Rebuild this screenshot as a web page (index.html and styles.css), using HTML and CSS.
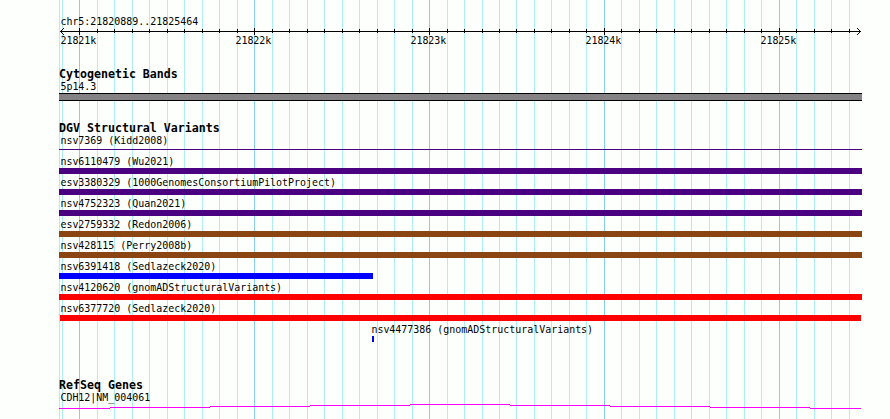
FILE: index.html
```
<!DOCTYPE html>
<html lang="en">
<head>
<meta charset="utf-8">
<title>chr5:21820889..21825464</title>
<link rel="stylesheet" href="styles.css">
</head>
<body>
<svg class="gridlines" width="890" height="419" viewBox="0 0 890 419" shape-rendering="crispEdges" aria-hidden="true">
  <path class="minor" d="M59.5 0v419M62.5 0v419M97.5 0v419M114.5 0v419M132.5 0v419M149.5 0v419M167.5 0v419M184.5 0v419M202.5 0v419M219.5 0v419M237.5 0v419M272.5 0v419M289.5 0v419M307.5 0v419M324.5 0v419M342.5 0v419M359.5 0v419M377.5 0v419M394.5 0v419M412.5 0v419M447.5 0v419M464.5 0v419M482.5 0v419M499.5 0v419M516.5 0v419M534.5 0v419M551.5 0v419M569.5 0v419M586.5 0v419M621.5 0v419M639.5 0v419M656.5 0v419M674.5 0v419M691.5 0v419M709.5 0v419M726.5 0v419M744.5 0v419M761.5 0v419M796.5 0v419M814.5 0v419M831.5 0v419M849.5 0v419"/>
  <path class="major" d="M79.5 0v419M254.5 0v419M429.5 0v419M604.5 0v419M779.5 0v419"/>
</svg>
<main class="browser">
  <section class="ruler">
    <div class="label">chr5:21820889..21825464</div>
    <svg class="axis" width="803" height="7" viewBox="59 27 803 7" shape-rendering="crispEdges" aria-hidden="true">
      <path d="M60 31.5H861"/>
      <path d="M97.5 29v4M114.5 29v4M132.5 29v4M149.5 29v4M167.5 29v4M184.5 29v4M202.5 29v4M219.5 29v4M237.5 29v4M272.5 29v4M289.5 29v4M307.5 29v4M324.5 29v4M342.5 29v4M359.5 29v4M377.5 29v4M394.5 29v4M412.5 29v4M447.5 29v4M464.5 29v4M482.5 29v4M499.5 29v4M516.5 29v4M534.5 29v4M551.5 29v4M569.5 29v4M586.5 29v4M621.5 29v4M639.5 29v4M656.5 29v4M674.5 29v4M691.5 29v4M709.5 29v4M726.5 29v4M744.5 29v4M761.5 29v4M796.5 29v4M814.5 29v4M831.5 29v4M849.5 29v4"/>
      <path d="M79.5 28v7M254.5 28v7M429.5 28v7M604.5 28v7M779.5 28v7"/>
      <path d="M61 30.5h1M62 29.5h1M63 28.5h1M61 32.5h1M62 33.5h1M63 34.5h1M859 30.5h1M858 29.5h1M857 28.5h1M859 32.5h1M858 33.5h1M857 34.5h1"/>
    </svg>
    <div class="ticks"><span>21821k</span><span>21822k</span><span>21823k</span><span>21824k</span><span>21825k</span></div>
  </section>

  <section class="track cyto">
    <h2>Cytogenetic Bands</h2>
    <div class="label">5p14.3</div>
    <div class="band"></div>
  </section>

  <section class="track variants">
    <h2>DGV Structural Variants</h2>
    <div class="feature thin"><div class="label">nsv7369 (Kidd2008)</div><div class="bar indigo"></div></div>
    <div class="feature"><div class="label">nsv6110479 (Wu2021)</div><div class="bar indigo"></div></div>
    <div class="feature"><div class="label">esv3380329 (1000GenomesConsortiumPilotProject)</div><div class="bar indigo"></div></div>
    <div class="feature"><div class="label">nsv4752323 (Quan2021)</div><div class="bar indigo"></div></div>
    <div class="feature"><div class="label">esv2759332 (Redon2006)</div><div class="bar brown"></div></div>
    <div class="feature"><div class="label">nsv428115 (Perry2008b)</div><div class="bar brown"></div></div>
    <div class="feature"><div class="label">nsv6391418 (Sedlazeck2020)</div><div class="bar blue partial"></div></div>
    <div class="feature"><div class="label">nsv4120620 (gnomADStructuralVariants)</div><div class="bar red"></div></div>
    <div class="feature"><div class="label">nsv6377720 (Sedlazeck2020)</div><div class="bar red inset"></div></div>
    <div class="feature small"><div class="label">nsv4477386 (gnomADStructuralVariants)</div><div class="bar blue"></div></div>
  </section>

  <section class="track genes">
    <h2>RefSeq Genes</h2>
    <div class="label">CDH12|NM_004061</div>
    <svg class="intron" width="803" height="5" viewBox="59 404 803 5" shape-rendering="crispEdges" aria-hidden="true">
      <path d="M59 408.5H110M110 407.5H210M210 406.5H310M310 405.5H410M410 404.5H510M510 405.5H610M610 406.5H710M710 407.5H810M810 408.5H861"/>
    </svg>
  </section>
</main>
</body>
</html>
```
FILE: styles.css
```
body {
  margin: 0;
  background: #fdfffc;
  color: #000;
  font: 9.967px/14px "DejaVu Sans Mono", "Liberation Mono", monospace;
  overflow: hidden;
}

.gridlines {
  position: absolute;
  top: 0;
  left: 0;
  z-index: -1;
}

.gridlines path {
  fill: none;
  stroke-width: 1;
}

.minor { stroke: #afeeee; }
.major { stroke: #87ceeb; }

.browser {
  box-sizing: border-box;
  width: 862px;
  height: 419px;
  padding: 15px 0 0 59px;
}

.label {
  height: 12px;
  padding-left: 1.4px;
  white-space: nowrap;
}

.axis {
  display: block;
  overflow: visible;
}

.axis path {
  fill: none;
  stroke: #000;
}

.ticks {
  display: flex;
  height: 12px;
  padding-left: 1.4px;
}

.ticks span { flex: 0 0 175px; }
.ticks span:last-child { flex-basis: auto; }

h2 {
  height: 13px;
  margin: 0;
  font-size: 11.627px;
  line-height: 14px;
  font-weight: bold;
  white-space: nowrap;
}

.cyto { margin-top: 21px; }

.band {
  box-sizing: border-box;
  height: 8px;
  margin-top: 1px;
  border: solid #000;
  border-width: 1px 0;
  background: #848284;
}

.variants { margin-top: 20px; }

.feature { height: 21px; }

.bar {
  height: 6px;
  margin-top: 1px;
}

.thin .bar {
  height: 1px;
  margin-top: 3px;
}

.indigo { background: #4b0082; }
.brown { background: #8b4513; }
.blue { background: #00f; }
.red { background: #f00; }

.partial { width: 314px; }
.inset { margin-left: 1px; margin-right: 1px; }

.small { padding-left: 311px; }
.small .bar { width: 2px; margin-left: 2px; }

.genes { margin-top: 34px; }

.intron {
  display: block;
  margin-top: 1px;
}

.intron path {
  fill: none;
  stroke: #f0f;
}
```
